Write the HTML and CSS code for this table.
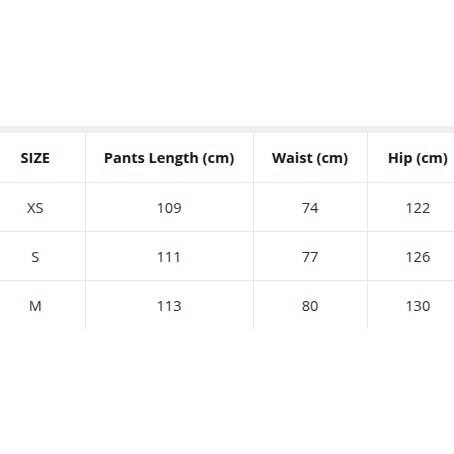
FILE: index.html
```html
<!DOCTYPE html>
<html>
<head>
<meta charset="utf-8">
<link rel="stylesheet" href="styles.css">
</head>
<body>
<div class="page">
  <div class="band"></div>
  <table class="size-table">
    <colgroup>
      <col class="c1"><col class="c2"><col class="c3"><col class="c4">
    </colgroup>
    <thead>
      <tr><th>SIZE</th><th>Pants Length (cm)</th><th>Waist (cm)</th><th>Hip (cm)</th></tr>
    </thead>
    <tbody>
      <tr><td>XS</td><td>109</td><td>74</td><td>122</td></tr>
      <tr><td>S</td><td>111</td><td>77</td><td>126</td></tr>
      <tr><td>M</td><td>113</td><td>80</td><td>130</td></tr>
    </tbody>
  </table>
</div>
</body>
</html>
```
FILE: styles.css
```css
html, body {
  margin: 0;
  padding: 0;
  background: #fff;
  overflow: hidden;
}
.page {
  width: 454px;
  height: 454px;
  padding-top: 126px;
  box-sizing: border-box;
  font-family: "Open Sans", "Noto Sans", sans-serif;
  color: #333;
}
.band {
  height: 7px;
  background: #f0f0f0;
}
.size-table {
  margin-left: -14px;
  width: 482px;
  table-layout: fixed;
  border-collapse: collapse;
}
.c1 { width: 99px; }
.c2 { width: 168px; }
.c3 { width: 114px; }
.c4 { width: 101px; }
.size-table th,
.size-table td {
  text-align: center;
  padding: 0;
  border-left: 1px solid #e8e8e8;
  border-bottom: 1px solid #e8e8e8;
  font-size: 14.5px;
}
.size-table th {
  height: 49px;
  font-weight: 700;
  color: #1a1a1a;
}
.size-table td {
  height: 48px;
}
.size-table tbody tr:last-child td {
  border-bottom: none;
}
.size-table th:first-child,
.size-table td:first-child {
  border-left: none;
}
```
